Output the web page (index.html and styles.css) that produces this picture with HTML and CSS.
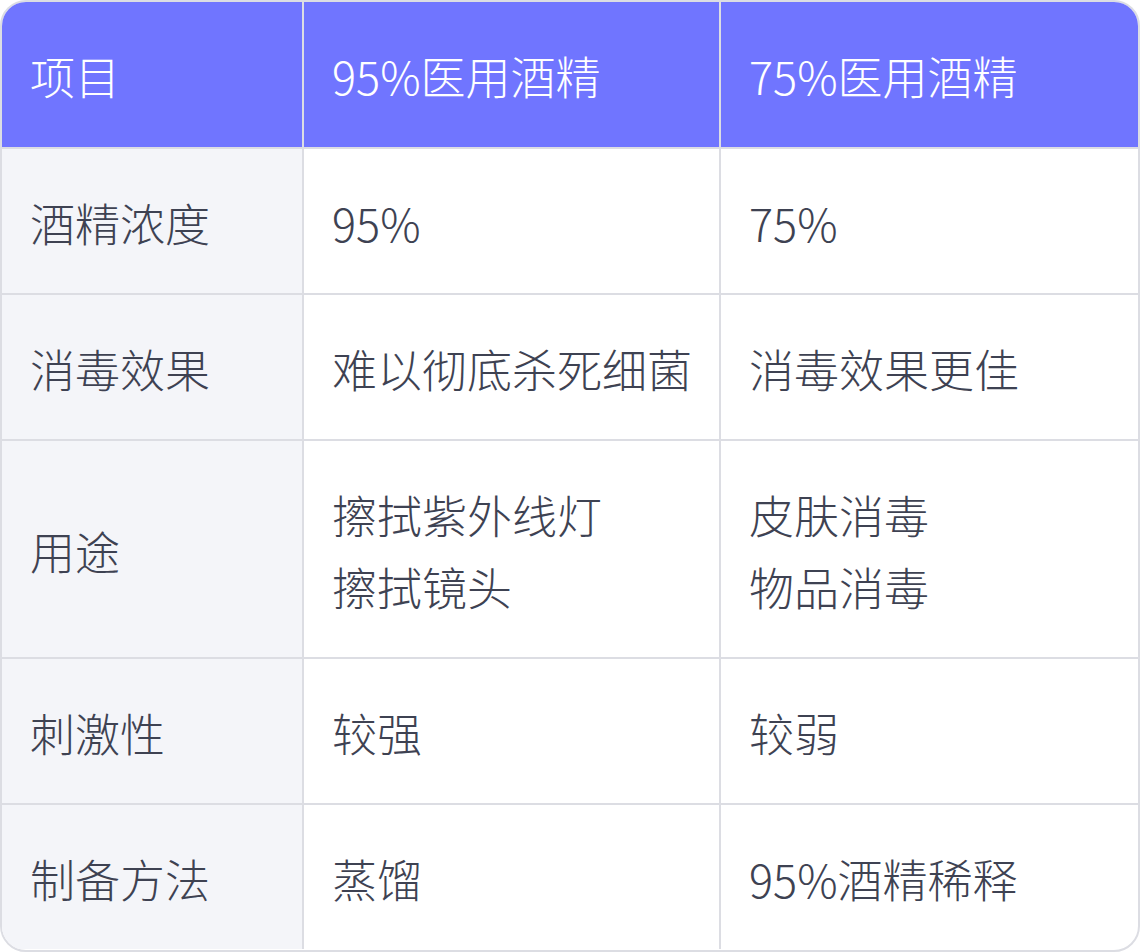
FILE: index.html
```html
<!DOCTYPE html>
<html lang="zh">
<head>
<meta charset="utf-8">
<link rel="stylesheet" href="styles.css">
</head>
<body>
<div class="frame">
  <table class="compare">
    <colgroup>
      <col class="c1"><col class="c2"><col class="c3">
    </colgroup>
    <thead>
      <tr><th>项目</th><th>95%医用酒精</th><th>75%医用酒精</th></tr>
    </thead>
    <tbody>
      <tr><td>酒精浓度</td><td>95%</td><td>75%</td></tr>
      <tr><td>消毒效果</td><td>难以彻底杀死细菌</td><td>消毒效果更佳</td></tr>
      <tr class="tall"><td>用途</td><td>擦拭紫外线灯<br>擦拭镜头</td><td>皮肤消毒<br>物品消毒</td></tr>
      <tr><td>刺激性</td><td>较强</td><td>较弱</td></tr>
      <tr><td>制备方法</td><td>蒸馏</td><td>95%酒精稀释</td></tr>
    </tbody>
  </table>
</div>
</body>
</html>
```

FILE: styles.css
```css
html, body {
  margin: 0;
  padding: 0;
  background: #ffffff;
}
.frame {
  width: 1140px;
  height: 952px;
  box-sizing: border-box;
  border: 2px solid #dcdde3;
  border-radius: 26px;
  overflow: hidden;
  background: #ffffff;
}
.compare {
  width: 100%;
  border-collapse: collapse;
  table-layout: fixed;
  font-family: "Noto Sans CJK SC", "Noto Sans", sans-serif;
  font-weight: 300;
  font-size: 45px;
  line-height: 72px;
  color: #3e4252;
}
.c1 { width: 301px; }
.c2 { width: 417px; }
.c3 { width: 418px; }
.compare th,
.compare td {
  padding: 3px 12px 0 28px;
  text-align: left;
  vertical-align: middle;
  white-space: nowrap;
  border-right: 2px solid #dcdde3;
  border-bottom: 2px solid #dcdde3;
}
.compare th:last-child,
.compare td:last-child {
  border-right: none;
}
.compare tbody tr:last-child td {
  border-bottom: none;
}
.compare th {
  height: 142px;
  background: #7075ff;
  color: #ffffff;
  font-weight: 300;
}
.compare td {
  height: 141px;
}
.compare tr.tall td {
  height: 213px;
}
.compare td:first-child {
  background: #f4f5f9;
}
```
